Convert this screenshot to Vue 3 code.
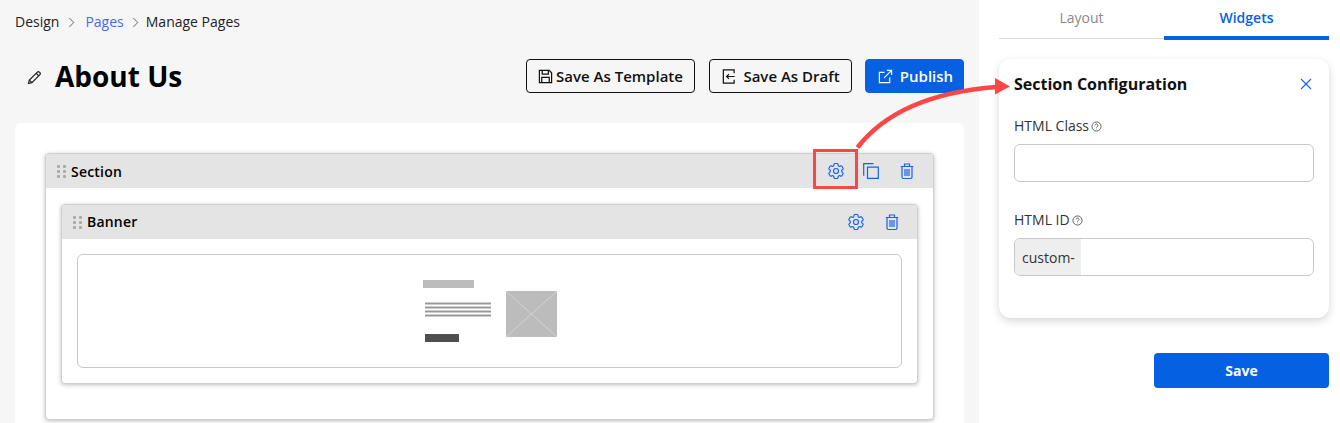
<script setup>
const crumbs = ['Design', 'Pages', 'Manage Pages']

const gearPath = 'M9.594 3.94c.09-.542.56-.94 1.11-.94h2.593c.55 0 1.02.398 1.11.94l.213 1.281c.063.374.313.686.645.87.074.04.147.083.22.127.325.196.72.257 1.075.124l1.217-.456a1.125 1.125 0 0 1 1.37.49l1.296 2.247a1.125 1.125 0 0 1-.26 1.431l-1.003.827c-.293.241-.438.613-.43.992a7.723 7.723 0 0 1 0 .255c-.008.378.137.75.43.991l1.004.827c.424.35.534.955.26 1.43l-1.298 2.247a1.125 1.125 0 0 1-1.369.491l-1.217-.456c-.355-.133-.75-.072-1.076.124a6.47 6.47 0 0 1-.22.128c-.331.183-.581.495-.644.869l-.213 1.281c-.09.543-.56.94-1.11.94h-2.594c-.55 0-1.019-.398-1.11-.94l-.213-1.281c-.062-.374-.312-.686-.644-.87a6.52 6.52 0 0 1-.22-.127c-.325-.196-.72-.257-1.076-.124l-1.217.456a1.125 1.125 0 0 1-1.369-.49l-1.297-2.247a1.125 1.125 0 0 1 .26-1.431l1.004-.827c.292-.24.437-.613.43-.991a6.932 6.932 0 0 1 0-.255c.007-.38-.138-.751-.43-.992l-1.004-.827a1.125 1.125 0 0 1-.26-1.43l1.297-2.247a1.125 1.125 0 0 1 1.37-.491l1.216.456c.356.133.751.072 1.076-.124.072-.044.146-.086.22-.128.332-.183.582-.495.644-.869l.214-1.28Z'
const trashPath = 'M2 3.500v10.500a1.500 1.500 0 0 0 1.500 1.500h7a1.500 1.500 0 0 0 1.500-1.500v-10.500M.7 3.500h12.600M4.500 3.500v-2.500h5v2.500M5 6v7M7 6v7M9 6v7'
const helpPath = 'M4.400 4.800a1.600 1.600 0 1 1 2.400 1.400c-.5.300-.8.500-.8 1M6 8.500v.6'
</script>

<template>
  <div class="page">
    <main class="main">
      <nav class="crumbs">
        <span>{{ crumbs[0] }}</span>
        <svg class="chev" viewBox="0 0 8 12"><path d="M1.500 1l5 5-5 5" /></svg>
        <a>{{ crumbs[1] }}</a>
        <svg class="chev chev-2" viewBox="0 0 8 12"><path d="M1.500 1l5 5-5 5" /></svg>
        <span>{{ crumbs[2] }}</span>
      </nav>

      <header class="head">
        <svg class="pencil" viewBox="0 0 16 16">
          <path d="M1.600 14.400l.9-3.600 8.600-8.600a1.400 1.400 0 0 1 2 0l.7.7a1.400 1.400 0 0 1 0 2l-8.600 8.600z" />
          <path d="M9.800 3.500l2.700 2.700M2.500 10.800l2.700 2.700" />
        </svg>
        <h1>About Us</h1>
        <div class="actions">
          <button class="btn tpl">
            <svg viewBox="0 0 16 16" class="ico">
              <path d="M1.500 1.500h10.500l2.500 2.500v10.500h-13z" />
              <path d="M4.500 1.500v4h6.500v-4M4 14.500v-5.500h8v5.500" />
            </svg>
            Save As Template
          </button>
          <button class="btn draft">
            <svg viewBox="0 0 16 16" class="ico">
              <path d="M14 4.500v-3.500h-11.500v14h11.500v-3.500" />
              <path d="M14.500 8h-8.500M8.500 5.500l-2.500 2.500 2.500 2.500" />
            </svg>
            Save As Draft
          </button>
          <button class="btn publish">
            <svg viewBox="0 0 16 16" class="ico">
              <path d="M12.500 9v5.500h-11v-11h5.500" />
              <path d="M9.500 1.500h5v5M14.500 1.500l-8 8" />
            </svg>
            Publish
          </button>
        </div>
      </header>

      <section class="canvas">
        <div class="block section">
          <div class="bar">
            <span class="grip"><i v-for="n in 6" :key="n"></i></span>
            <strong>Section</strong>
            <div class="tools">
              <svg class="gear" viewBox="0 0 24 24">
                <path :d="gearPath" />
                <circle cx="12" cy="12" r="3" />
              </svg>
              <svg class="copy" viewBox="0 0 16 16">
                <path d="M10.500 .7h-9.800v12M4.500 4.200h10.800v11.100h-10.800z" />
              </svg>
              <svg class="trash" viewBox="0 0 14 16">
                <path :d="trashPath" />
              </svg>
            </div>
          </div>
          <div class="body">
            <div class="block banner">
              <div class="bar">
                <span class="grip"><i v-for="n in 6" :key="n"></i></span>
                <strong>Banner</strong>
                <div class="tools two">
                  <svg class="gear" viewBox="0 0 24 24">
                    <path :d="gearPath" />
                    <circle cx="12" cy="12" r="3" />
                  </svg>
                  <svg class="trash" viewBox="0 0 14 16">
                    <path :d="trashPath" />
                  </svg>
                </div>
              </div>
              <div class="banner-body">
                <div class="preview">
                  <svg class="thumb" viewBox="0 0 136 64" width="136" height="64">
                    <rect x="0" y="0" width="51" height="8" fill="#bcbcbc" />
                    <path d="M2 23.500h66M2 27.500h66M2 31.500h66M2 35.500h66" stroke="#999" stroke-width="2" fill="none" />
                    <rect x="2" y="54" width="34" height="8" fill="#4f4f4f" />
                    <rect x="83" y="11" width="51" height="46" fill="#bcbcbc" />
                    <path d="M83 11l51 46M134 11l-51 46" stroke="#d8d8d8" stroke-width=".8" fill="none" />
                  </svg>
                </div>
              </div>
            </div>
          </div>
        </div>
      </section>
    </main>

    <aside class="side">
      <div class="tabs">
        <div class="tab">Layout</div>
        <div class="tab on">Widgets</div>
      </div>
      <div class="panel">
        <div class="panel-head">
          <h2>Section Configuration</h2>
          <svg class="close" viewBox="0 0 12 12"><path d="M1 1l10 10M11 1l-10 10" /></svg>
        </div>
        <label class="lbl">HTML Class
          <svg class="help" viewBox="0 0 12 12">
            <circle cx="6" cy="6" r="5" />
            <path :d="helpPath" />
          </svg>
        </label>
        <div class="input"></div>
        <label class="lbl second">HTML ID
          <svg class="help" viewBox="0 0 12 12">
            <circle cx="6" cy="6" r="5" />
            <path :d="helpPath" />
          </svg>
        </label>
        <div class="input"><span class="prefix">custom-</span></div>
      </div>
      <div class="save-row">
        <button class="save">Save</button>
      </div>
    </aside>

    <!-- callout drawn over the screenshot -->
    <div class="callout-box"></div>
    <svg class="callout-arrow" viewBox="0 0 1340 423" width="1340" height="423">
      <path d="M857.500 147.500C885 112 930 92 997 87" fill="none" stroke="#fb4747" stroke-width="4.500" />
      <path d="M995 78l15 8.500-15 8z" fill="#fb4747" />
    </svg>
  </div>
</template>

<style>
html, body {
  margin: 0;
  background: #fff;
}
</style>

<style scoped>
.page {
  position: relative;
  display: flex;
  width: 1340px;
  height: 423px;
  overflow: hidden;
  font-family: "Open Sans", "Liberation Sans", sans-serif;
  color: #000;
}

.main {
  width: 979px;
  flex: none;
  box-sizing: border-box;
  padding: 12px 15px 0;
  background: #f6f6f6;
}

.crumbs {
  display: flex;
  align-items: center;
  height: 20px;
  font-size: 14px;
  line-height: 20px;
  color: #222;
}
.crumbs a {
  color: #3f6fdc;
}
.chev {
  width: 7px;
  height: 11px;
  margin: 0 10px 0 9px;
  fill: none;
  stroke: #8a8a8a;
  stroke-width: 1.200;
}
.chev-2 {
  margin: 0 7px 0 8px;
}

.head {
  display: flex;
  align-items: center;
  height: 34px;
  margin-top: 27px;
}
.pencil {
  width: 15px;
  height: 15px;
  margin: 3px 0 0 12px;
  fill: none;
  stroke: #222;
  stroke-width: 1.300;
}
h1 {
  margin: 0 0 0 13px;
  font-size: 28px;
  line-height: 34px;
  font-weight: 700;
}
.actions {
  display: flex;
  gap: 14px;
  margin-left: auto;
}
.btn {
  display: flex;
  align-items: center;
  justify-content: center;
  box-sizing: border-box;
  height: 34px;
  border: 1px solid #111;
  border-radius: 4px;
  background: transparent;
  color: #111;
  font-family: inherit;
  font-size: 15px;
  font-weight: 600;
  padding: 0;
  white-space: nowrap;
}
.btn.tpl { width: 169px; gap: 3px; }
.btn.draft { width: 143px; gap: 7px; }
.btn.publish {
  width: 99px;
  margin-left: -1px;
  padding-left: 2px;
  gap: 7px;
  border-color: #0561e2;
  background: #0561e2;
  color: #fff;
}
.ico {
  width: 15px;
  height: 15px;
  flex: none;
  fill: none;
  stroke: currentColor;
  stroke-width: 1.300;
}

.canvas {
  box-sizing: border-box;
  height: 320px;
  margin-top: 30px;
  padding: 30px 30px 0;
  background: #fff;
  border-radius: 6px 6px 0 0;
}

.block {
  box-sizing: border-box;
  border: 1px solid #cfcfcf;
  border-radius: 4px;
  background: #fff;
  box-shadow: 0 1px 4px rgba(0, 0, 0, 0.25);
}
.section {
  height: 267px;
}
.bar {
  display: flex;
  align-items: center;
  height: 34px;
  padding-left: 11px;
  background: #e4e4e4;
  border-radius: 3px 3px 0 0;
  font-size: 14px;
  font-weight: 600;
}
.bar strong {
  margin-left: 5px;
  font-weight: 600;
  letter-spacing: 0.2px;
  color: #000;
}
.banner .bar strong {
  margin-top: -1px;
}
.grip {
  display: grid;
  grid-template-columns: 3px 3px;
  grid-auto-rows: 3px;
  gap: 2px 3px;
  width: 9px;
}
.grip i {
  background: #aaa;
  border-radius: 1px;
}
.tools {
  display: flex;
  align-items: center;
  margin-left: auto;
  padding-right: 19px;
}
.tools svg {
  fill: none;
  stroke: #1a62ea;
}
.gear {
  width: 20px;
  height: 20px;
  stroke-width: 1.400;
}
.copy {
  width: 16px;
  height: 16px;
  margin-left: 17px;
  stroke-width: 1.200;
}
.trash {
  width: 14px;
  height: 16px;
  margin-left: 21px;
  stroke-width: 1.200;
}
.tools.two {
  padding-right: 18px;
}
.two .trash {
  margin-left: 19.500px;
}
.body {
  padding: 16px 15px 0;
}
.banner {
  height: 180px;
}
.banner-body {
  padding: 15px;
}
.preview {
  display: flex;
  justify-content: center;
  box-sizing: border-box;
  height: 114px;
  padding-top: 25px;
  border: 1px solid #c9c9c9;
  border-radius: 6px;
}
.thumb {
  margin-left: 2px;
}

.side {
  flex: 1;
  box-sizing: border-box;
  padding: 0 11px 0 20px;
  background: #fff;
}
.tabs {
  display: flex;
  align-items: flex-start;
  height: 39px;
}
.tab {
  flex: 1;
  box-sizing: border-box;
  height: 39px;
  padding-top: 8px;
  text-align: center;
  font-size: 14px;
  line-height: 20px;
  color: #8a8a8a;
  border-bottom: 1px solid #dcdcdc;
}
.tab.on {
  height: 40px;
  color: #0561e2;
  font-weight: 600;
  border-bottom: 4px solid #0561e2;
}
.panel {
  box-sizing: border-box;
  height: 259px;
  margin-top: 20px;
  padding: 14px 15px 0;
  border-radius: 12px;
  background: #fff;
  box-shadow: 0 3px 8px rgba(0, 0, 0, 0.16);
}
.panel-head {
  display: flex;
  align-items: center;
  justify-content: space-between;
  height: 22px;
}
h2 {
  margin: 0;
  font-size: 16px;
  line-height: 22px;
  font-weight: 700;
  color: #111;
}
.close {
  width: 12px;
  height: 12px;
  margin-right: 2px;
  fill: none;
  stroke: #1a62ea;
  stroke-width: 1.100;
}
.lbl {
  display: flex;
  align-items: center;
  height: 20px;
  margin-top: 21px;
  font-size: 14px;
  line-height: 20px;
  color: #333;
}
.lbl.second {
  margin-top: 28px;
}
.help {
  width: 11px;
  height: 11px;
  margin-left: 2px;
  fill: none;
  stroke: #444;
  stroke-width: 0.900;
}
.input {
  display: flex;
  box-sizing: border-box;
  height: 38px;
  margin-top: 8px;
  border: 1px solid #c9c9c9;
  border-radius: 6px;
  overflow: hidden;
  background: #fff;
}
.prefix {
  display: flex;
  align-items: center;
  padding: 0 6px 0 7px;
  background: #eee;
  font-size: 14px;
  color: #333;
}
.save-row {
  display: flex;
  justify-content: flex-end;
  margin-top: 35px;
}
.save {
  width: 175px;
  height: 35px;
  border: none;
  border-radius: 4px;
  background: #0561e2;
  color: #fff;
  font-family: inherit;
  font-size: 14px;
  font-weight: 700;
}

.callout-box {
  position: absolute;
  left: 813px;
  top: 149px;
  width: 45px;
  height: 40px;
  box-sizing: border-box;
  border: 3px solid #fb4747;
}
.callout-arrow {
  position: absolute;
  left: 0;
  top: 0;
  pointer-events: none;
}
</style>
